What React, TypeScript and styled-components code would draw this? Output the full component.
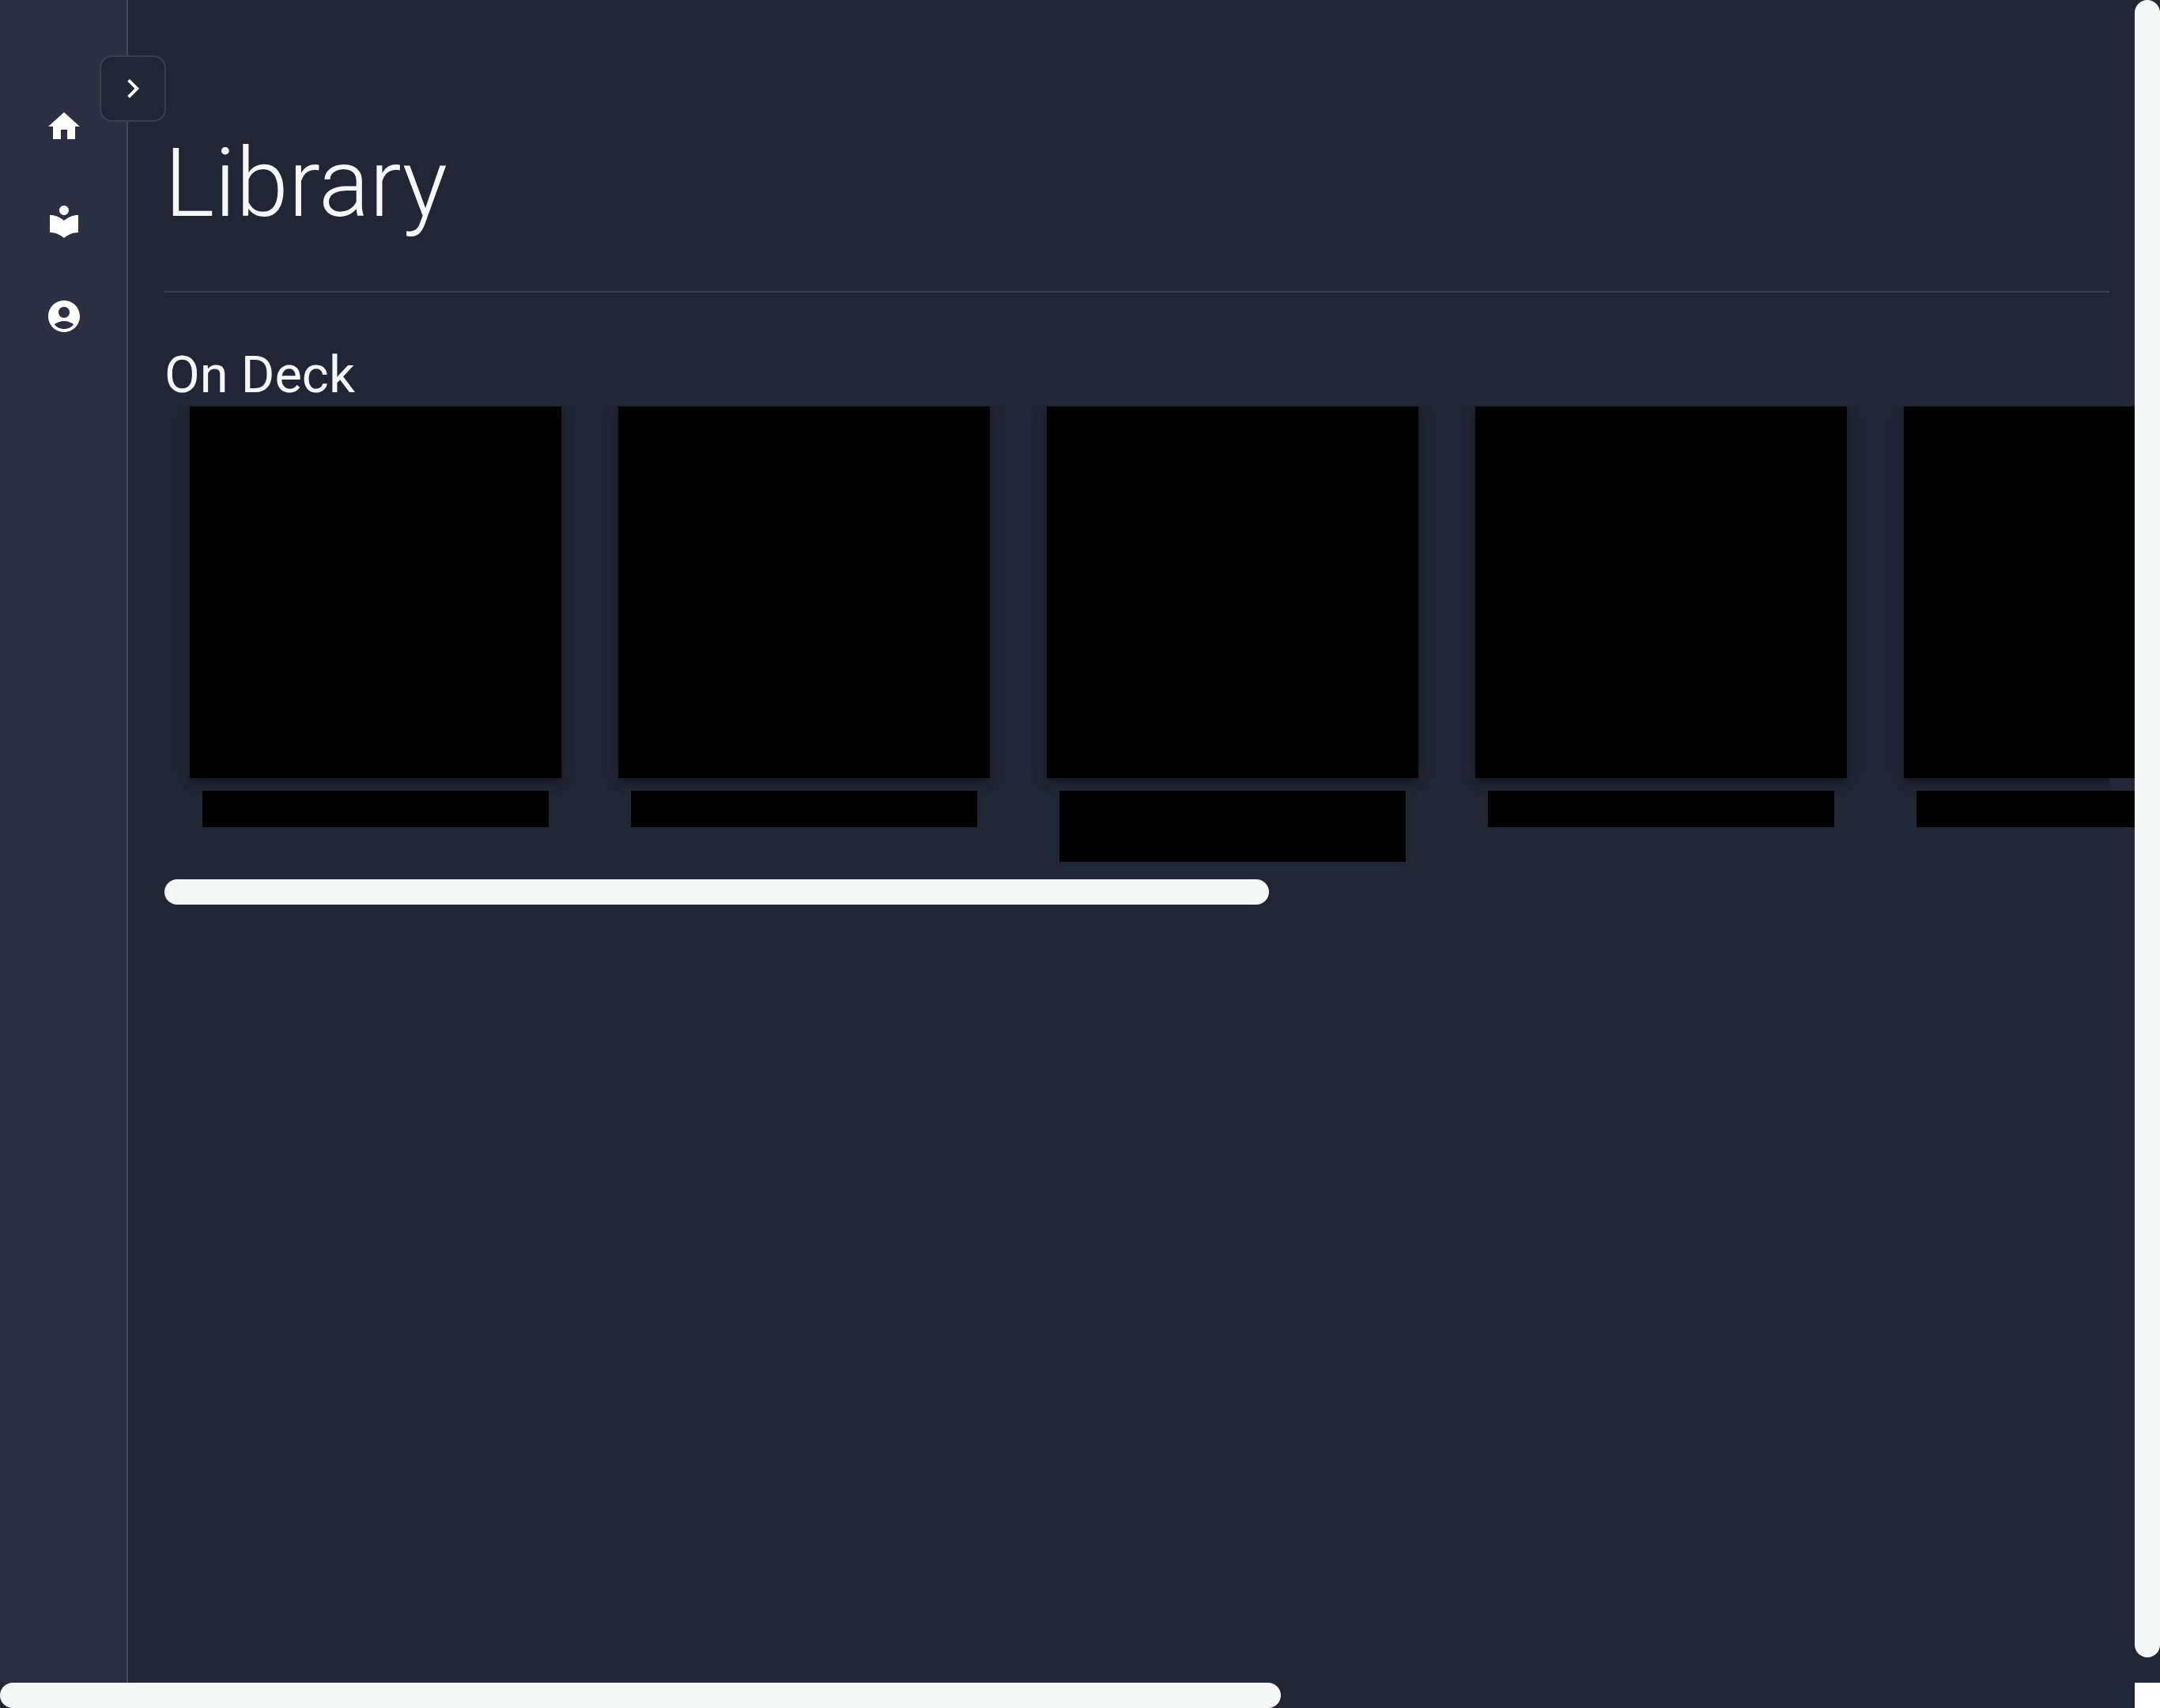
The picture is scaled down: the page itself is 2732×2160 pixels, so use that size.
import React from "react";
import styled, { createGlobalStyle } from "styled-components";

const color = {
  page: "#212634",
  sidebar: "#2b3143",
  line: "rgba(255, 255, 255, 0.12)",
  text: "#f5f8f7",
  icon: "#ffffff",
};

const GlobalStyle = createGlobalStyle`
  *, *::before, *::after { box-sizing: border-box; }
  body {
    margin: 0;
    background: ${color.page};
    color: ${color.text};
    font-family: Roboto, "Liberation Sans", sans-serif;
  }
`;

const Window = styled.div`
  display: grid;
  grid-template-columns: minmax(0, 1fr) 32px;
  grid-template-rows: minmax(0, 1fr) 32px;
  height: 100vh;
  overflow: hidden;
`;

const Viewport = styled.div`
  position: relative;
  display: flex;
  min-width: 0;
  overflow: hidden;
`;

const Sidebar = styled.nav`
  flex: none;
  display: flex;
  flex-direction: column;
  width: 162px;
  padding-top: 100px;
  background: ${color.sidebar};
  border-right: 2px solid ${color.line};
`;

const NavLink = styled.a`
  display: flex;
  align-items: center;
  justify-content: center;
  height: 120px;
  margin-right: -2px;
  color: ${color.icon};
`;

const Toggle = styled.button`
  position: absolute;
  top: 70px;
  left: 126px;
  display: flex;
  align-items: center;
  justify-content: center;
  width: 84px;
  height: 84px;
  padding: 0;
  color: ${color.icon};
  background: ${color.page};
  border: 2px solid ${color.line};
  border-radius: 16px;
  cursor: pointer;
`;

const Icon = styled.svg`
  display: block;
  width: 48px;
  height: 48px;
  fill: currentColor;
`;

const Main = styled.main`
  flex: 1;
  min-width: 0;
  padding: 160px 32px 0 46px;
`;

const PageTitle = styled.h1`
  margin: 0;
  padding-bottom: 64px;
  border-bottom: 2px solid ${color.line};
  font-size: 120px;
  font-weight: 300;
  line-height: 144px;
`;

const Section = styled.section`
  padding-top: 64px;
`;

const SectionTitle = styled.h2`
  margin: 0;
  font-size: 65px;
  font-weight: 400;
  line-height: 80px;
`;

const Shelf = styled.ul`
  position: relative;
  display: flex;
  gap: 72px;
  margin: 0 -32px 0 0;
  padding: 0 32px 22px;
  list-style: none;
  overflow: hidden;

  /* Ends the card shadows at the content edge while covers run on to the window edge. */
  &::after {
    content: "";
    position: absolute;
    inset: 0 0 0 auto;
    width: 32px;
    background: ${color.page};
  }
`;

const Card = styled.li`
  flex: none;
  width: 470px;
`;

const CoverFrame = styled.div`
  box-shadow:
    0 4px 8px -2px rgba(0, 0, 0, 0.2),
    0 8px 10px rgba(0, 0, 0, 0.14),
    0 2px 20px rgba(0, 0, 0, 0.12);
`;

const Cover = styled.div`
  position: relative;
  z-index: 1;
  aspect-ratio: 1;
  background: #000;
`;

const Caption = styled.div<{ $lines: number }>`
  position: relative;
  z-index: 1;
  height: ${({ $lines }) => ($lines > 1 ? 90 : 46)}px;
  margin: 16px 16px 0;
  background: #000;
`;

const Track = styled.div<{ $vertical?: boolean }>`
  display: flex;
  flex-direction: ${({ $vertical }) => ($vertical ? "column" : "row")};
  ${({ $vertical }) => ($vertical ? "width" : "height")}: 32px;
`;

const Thumb = styled.div<{ $size: number }>`
  flex: 0 0 ${({ $size }) => $size}%;
  border-radius: 16px;
  background: ${color.text};
`;

const Corner = styled.div`
  background: #fff;
`;

const links = [
  { label: "Home", path: "M10 20v-6h4v6h5v-8h3L12 3 2 12h3v8z" },
  {
    label: "Library",
    path: "M12 11.55C9.64 9.35 6.48 8 3 8v11c3.48 0 6.64 1.35 9 3.55 2.36-2.19 5.52-3.55 9-3.55V8c-3.48 0-6.64 1.35-9 3.55zM12 8c1.66 0 3-1.34 3-3s-1.34-3-3-3-3 1.34-3 3 1.34 3 3 3z",
  },
  {
    label: "Account",
    path: "M12 2C6.48 2 2 6.48 2 12s4.48 10 10 10 10-4.48 10-10S17.52 2 12 2zm0 4c1.93 0 3.5 1.57 3.5 3.5S13.93 13 12 13s-3.5-1.57-3.5-3.5S10.07 6 12 6zm0 14c-2.03 0-4.43-.82-6.14-2.88C7.55 15.8 9.68 15 12 15s4.45.8 6.14 2.12C16.43 19.18 14.03 20 12 20z",
  },
];

/* Number of caption lines under each cover. */
const onDeck = [1, 1, 2, 1, 1];

function Glyph({ path }: { path: string }) {
  return (
    <Icon viewBox="0 0 24 24" aria-hidden="true">
      <path d={path} />
    </Icon>
  );
}

export default function App() {
  return (
    <>
      <GlobalStyle />
      <Window>
        <Viewport>
          <Sidebar aria-label="Main">
            {links.map(({ label, path }) => (
              <NavLink key={label} href={`#${label.toLowerCase()}`} aria-label={label}>
                <Glyph path={path} />
              </NavLink>
            ))}
          </Sidebar>
          <Main>
            <PageTitle>Library</PageTitle>
            <Section>
              <SectionTitle>On Deck</SectionTitle>
              <Shelf>
                {onDeck.map((lines, i) => (
                  <Card key={i}>
                    <CoverFrame>
                      <Cover />
                    </CoverFrame>
                    <Caption $lines={lines} />
                  </Card>
                ))}
              </Shelf>
              <Track>
                <Thumb $size={56.8} />
              </Track>
            </Section>
          </Main>
          <Toggle type="button" aria-label="Expand sidebar">
            <Glyph path="M10 6L8.59 7.41 13.17 12l-4.58 4.59L10 18l6-6z" />
          </Toggle>
        </Viewport>
        <Track $vertical>
          <Thumb $size={98.5} />
        </Track>
        <Track>
          <Thumb $size={60} />
        </Track>
        <Corner />
      </Window>
    </>
  );
}
